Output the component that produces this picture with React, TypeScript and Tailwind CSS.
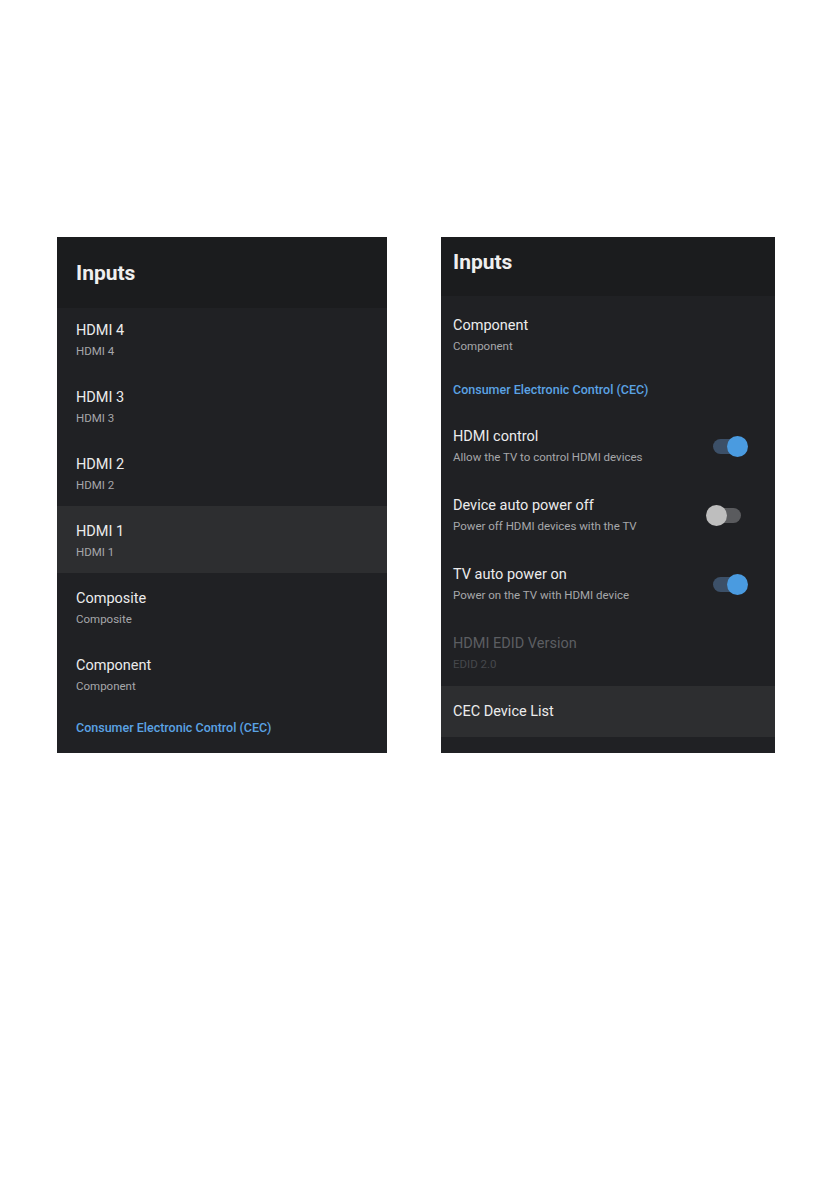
import React from "react";

const font = { fontFamily: "Roboto, 'Noto Sans', Arial, sans-serif" };

function Row({
  title,
  sub,
  h,
  pt,
  highlight,
  disabled,
  toggle,
}: {
  title: string;
  sub?: string;
  h: string;
  pt: string;
  highlight?: boolean;
  disabled?: boolean;
  toggle?: "on" | "off";
}) {
  return (
    <div className={`${h} ${pt} ${highlight ? "bg-[#2d2e30]" : ""} pl-[19px] pr-[27px]`}>
      <div className="flex items-center justify-between">
        <div className="flex flex-col">
          <div
            className={`text-[14.5px] leading-[20px] ${disabled ? "text-[#5c5e62]" : "text-[#ececec]"}`}
          >
            {title}
          </div>
          {sub && (
            <div
              className={`mt-[2px] text-[11.5px] leading-[16px] ${disabled ? "text-[#46484c]" : "text-[#a6a7aa]"}`}
            >
              {sub}
            </div>
          )}
        </div>
        {toggle && <Toggle on={toggle === "on"} />}
      </div>
    </div>
  );
}

function Toggle({ on }: { on: boolean }) {
  return (
    <div className="relative h-[21px] w-[42px]">
      <div
        className={`absolute left-[7px] top-[3px] h-[15px] w-[28px] rounded-full ${on ? "bg-[#3c5068]" : "bg-[#5a5b5e]"}`}
      />
      <div
        className={`absolute top-0 h-[21px] w-[21px] rounded-full ${on ? "left-[21px] bg-[#4a9be0]" : "left-0 bg-[#bebebe]"}`}
      />
    </div>
  );
}

export default function App() {
  return (
    <div className="min-h-[1191px] w-full bg-white" style={font}>
      <div className="flex items-start gap-[54px] pl-[57px] pt-[237px]">
        {/* Left panel */}
        <div className="flex h-[516px] w-[330px] flex-col bg-[#202124]">
          <div className="flex h-[71px] items-center bg-[#1b1c1e] pl-[19px] pt-[2px]">
            <div className="text-[21px] font-bold leading-[25px] text-[#efefef]">Inputs</div>
          </div>
          <Row title="HDMI 4" sub="HDMI 4" h="h-[64px]" pt="pt-[13px]" />
          <Row title="HDMI 3" sub="HDMI 3" h="h-[67px]" pt="pt-[16px]" />
          <Row title="HDMI 2" sub="HDMI 2" h="h-[67px]" pt="pt-[16px]" />
          <Row title="HDMI 1" sub="HDMI 1" h="h-[67px]" pt="pt-[16px]" highlight />
          <Row title="Composite" sub="Composite" h="h-[67px]" pt="pt-[16px]" />
          <Row title="Component" sub="Component" h="h-[67px]" pt="pt-[16px]" />
          <div className="h-[46px] pl-[19px] pt-[13px] text-[12.5px] font-medium leading-[16px] text-[#5ba3e4]">
            Consumer Electronic Control (CEC)
          </div>
        </div>

        {/* Right panel */}
        <div className="flex h-[516px] w-[334px] flex-col bg-[#202124]">
          <div className="h-[59px] bg-[#1b1c1e] pl-[12px] pt-[13px]">
            <div className="text-[21px] font-bold leading-[25px] text-[#efefef]">Inputs</div>
          </div>
          <div className="[&>div]:pl-[12px]">
            <Row title="Component" sub="Component" h="h-[77px]" pt="pt-[20px]" />
          </div>
          <div className="h-[33px] pl-[12px] pt-[9px] text-[12.5px] font-medium leading-[16px] text-[#5ba3e4]">
            Consumer Electronic Control (CEC)
          </div>
          <div className="[&>div]:pl-[12px]">
            <Row
              title="HDMI control"
              sub="Allow the TV to control HDMI devices"
              h="h-[69px]"
              pt="pt-[21px]"
              toggle="on"
            />
            <Row
              title="Device auto power off"
              sub="Power off HDMI devices with the TV"
              h="h-[69px]"
              pt="pt-[21px]"
              toggle="off"
            />
            <Row
              title="TV auto power on"
              sub="Power on the TV with HDMI device"
              h="h-[69px]"
              pt="pt-[21px]"
              toggle="on"
            />
            <Row title="HDMI EDID Version" sub="EDID 2.0" h="h-[73px]" pt="pt-[21px]" disabled />
          </div>
          <div className="flex h-[51px] items-center bg-[#2d2e30] pl-[12px] pt-[1px]">
            <div className="text-[14.5px] leading-[20px] text-[#ececec]">CEC Device List</div>
          </div>
        </div>
      </div>
    </div>
  );
}
